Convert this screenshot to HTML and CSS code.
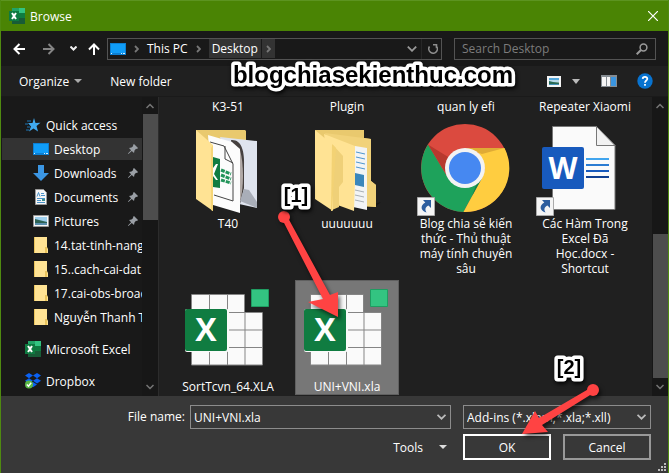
FILE: index.html
```html
<!DOCTYPE html>
<html lang="en">
<head>
<meta charset="utf-8">
<title>Browse</title>
<link rel="stylesheet" href="styles.css">
</head>
<body>
<svg class="defs" aria-hidden="true">
  <defs>
    <symbol id="excel" viewBox="0 0 16 16"><path fill="#21a366" d="M3 0h7v5H3z"/><path fill="#33c481" d="M10 0h6v5h-6z"/><path fill="#107c41" d="M10 5h6v5h-6z"/><path fill="#185c37" d="M3 10h13v6H3z"/><path fill="#0f7a40" d="M0 3h10v10H0z"/><path stroke="#fff" stroke-width="2" d="m3 5 4 6M7 5l-4 6"/></symbol>
    <symbol id="screen" viewBox="0 0 16 12"><path fill="#0c7fd2" d="M0 0h16v12H0z"/><path fill="#109df8" d="M1 1h14v9H1z"/><path fill="#d8f0ff" d="M1 10h1v1H1zM11 10h1v1h-1zM13 10h2v1h-2z"/></symbol>
    <symbol id="folder" viewBox="0 0 14 16"><path fill="#ffe394" d="M1 0h12v10l1 2v4H1z"/><path fill="#eac45c" d="M11 10h2v6h-2zM0 0h1v16H0z"/></symbol>
    <symbol id="pin" viewBox="0 0 10 10"><path fill="#9a9fa5" d="m6 0 4 4-1 1-1-.2L6.500 6.500 6 9 3.800 6.900.7 9.800 0 10l.2-.7L3.100 6.200 1 4l2.500-.5L5.200 2 5 1z"/></symbol>
    <symbol id="down" viewBox="0 0 8 5"><path fill="none" stroke="currentColor" stroke-width="1.500" d="m.5.5 3.500 3.500L7.500.5"/></symbol>
    <symbol id="right" viewBox="0 0 5 8"><path fill="none" stroke="#777" stroke-width="1.800" d="m1 1 3 3-3 3"/></symbol>
    <symbol id="shortcut" viewBox="0 0 18 19"><path fill="#f4f4f4" stroke="#aaa" d="M.5.500h17v18H.5z"/><path fill="#2c5d9e" d="M6 3h8v8l-2.500-2.500C8.500 10 7.500 12 9.500 15.500 4 14 2.500 9 8.300 5.500z"/></symbol>
    <symbol id="sheet" viewBox="0 0 96 96"><path fill="#fafafa" d="M12 12h53v18h18v52H12z"/><path fill="none" stroke="#858585" d="M11.500 11.500h53v18h18v52.500h-71zM29.500 12v70M47.500 12v70M65 30v52M12 29.500h53M12 47h70M12 64.500h70"/><rect x="5" y="26" width="44" height="43" rx="2" fill="#fafafa"/><rect x="5" y="26" width="42" height="42" rx="2" fill="#107c41"/><text x="26" y="58" class="badge-letter" text-anchor="middle">X</text><path fill="#33c481" stroke="#1f9c61" d="M71.500 6.500h17v17h-17z"/></symbol>
  </defs>
</svg>
<main class="window">
  <header class="titlebar">
    <svg class="i16"><use href="#excel"/></svg>
    <h1>Browse</h1>
    <button class="close" aria-label="Close"><svg width="10" height="10" viewBox="0 0 10 10"><path stroke="#fff" stroke-width="1.200" d="m0 0 10 10M10 0 0 10"/></svg></button>
  </header>

  <nav class="navbar" aria-label="Location">
    <button class="go" aria-label="Back"><svg width="12" height="12" viewBox="0 0 12 12"><path fill="none" stroke="#fff" stroke-width="2" d="M12 6H1.500M6.500 1l-5 5 5 5"/></svg></button>
    <button class="go" aria-label="Forward"><svg width="12" height="12" viewBox="0 0 12 12"><path fill="none" stroke="#858585" stroke-width="2" d="M0 6h10.500M5.500 1l5 5-5 5"/></svg></button>
    <button class="recent" aria-label="Recent locations"><svg width="7" height="5" viewBox="0 0 7 5"><path fill="none" stroke="#eee" stroke-width="2" d="m.5.5 3 3 3-3"/></svg></button>
    <button class="up" aria-label="Up"><svg width="12" height="12" viewBox="0 0 12 12"><path fill="none" stroke="#fff" stroke-width="2" d="M6 12V1.500M1 6.500l5-5 5 5"/></svg></button>
    <div class="address">
      <svg class="screen"><use href="#screen"/></svg>
      <svg class="sep"><use href="#right"/></svg>
      <a href="#pc">This PC</a>
      <svg class="sep"><use href="#right"/></svg>
      <a href="#desktop" class="current">Desktop</a>
      <button class="crumb-more" aria-label="Desktop folders"><svg class="sep"><use href="#right"/></svg></button>
      <button class="history" aria-label="Previous locations"><svg width="10" height="6"><use href="#down"/></svg></button>
      <button class="refresh" aria-label="Refresh"><svg width="11" height="12" viewBox="0 0 11 12"><path fill="none" stroke="#8d8d8d" stroke-width="1.600" d="M6 1.700h3.500v3.500M8.800 2.500A4.300 4.300 0 1 1 2.500 3.500"/></svg></button>
    </div>
    <label class="search"><input type="search" placeholder="Search Desktop" aria-label="Search Desktop"><svg width="12" height="12" viewBox="0 0 12 12"><circle cx="7.500" cy="4.500" r="3.400" fill="none" stroke="#999" stroke-width="1.500"/><path stroke="#999" stroke-width="2" d="M5 7 .7 11.300"/></svg></label>
  </nav>

  <div class="toolbar">
    <button class="organize">Organize <svg width="8" height="4" viewBox="0 0 8 4"><path fill="#aaa" d="M0 0h8L4 4z"/></svg></button>
    <button>New folder</button>
    <span class="tools-right">
      <button aria-label="Change your view"><svg width="14" height="11" viewBox="0 0 14 11"><path fill="#f5f5f5" d="M0 0h14v11H0z"/><path fill="#55a8dc" d="M2 2h10v3H2z"/><path fill="#b9dbea" d="M2 4h10v2H2z"/><path fill="#286a55" d="m2 5 4 1 6 .5V9H2z"/><path fill="#4692b8" d="M2 8h10v1H2z"/></svg></button>
      <button class="more" aria-label="More view options"><svg width="8" height="5" viewBox="0 0 8 5"><path fill="#bbb" d="M0 0h8L4 5z"/></svg></button>
      <button class="pane" aria-label="Show the preview pane"><svg width="16" height="12" viewBox="0 0 16 12"><path fill="#858c92" d="M0 0h16v12H0z"/><path fill="#f5f5f5" d="M1 2h4v9H1zM6 2h3v9H6z"/><path fill="#3a95e0" d="M10 2h5v9h-5z"/></svg></button>
      <button aria-label="Help"><svg width="16" height="16" viewBox="0 0 16 16"><circle cx="8" cy="8" r="7.700" fill="#0873d0"/><path fill="none" stroke="#fff" stroke-width="1.800" d="M5.700 5.900C5.800 3.200 10.500 3.300 10.300 6 10.100 7.600 8 7.500 8 9.800M8 11v1.700"/></svg></button>
    </span>
  </div>

  <div class="body">
    <aside class="sidebar">
      <ul class="tree">
        <li class="root"><svg class="i16" viewBox="0 0 16 16"><path fill="#40a9ee" d="m9 1 1.500 5 5-.3-4 3.300 1.500 5.500-4.500-3-4.500 3 2-5-3-3.500h4.500z"/><path stroke="#1c76b7" d="M2 4h4M0 7h3M2 10h3M1 13h3"/></svg><a href="#quick">Quick access</a></li>
        <li class="selected"><svg class="screen"><use href="#screen"/></svg><a href="#desktop">Desktop</a><svg class="pin"><use href="#pin"/></svg></li>
        <li><svg class="i16" viewBox="0 0 16 16"><path fill="#3b96e3" d="M5 0h6v8h5l-8 8-8-8h5z"/></svg><a href="#downloads">Downloads</a><svg class="pin"><use href="#pin"/></svg></li>
        <li><svg class="i16" viewBox="0 0 16 16"><path fill="#f6f6f6" stroke="#9a9a9a" d="M2.500.500h8l3 3v12h-11z"/><path fill="none" stroke="#4a91c8" d="M8 4.500h3M8 6.500h4M4 9.500h8M4 11.500h4M4 13.500h8M4 7.500l1.500-4 1.500 4"/><path fill="#3b8f8b" d="M9 10h3v2H9z"/></svg><a href="#documents">Documents</a><svg class="pin"><use href="#pin"/></svg></li>
        <li><svg class="i16" viewBox="0 0 16 16"><path fill="#f6f6f6" stroke="#999" d="M.5 2.500h15v11H.5z"/><path fill="#9fd0ee" d="M2 4h12v8H2z"/><path fill="#2d6355" d="m2 6 4 1 8 2v1H2z"/><path fill="#5a8fae" d="M2 10h12v2H2z"/></svg><a href="#pictures">Pictures</a><svg class="pin"><use href="#pin"/></svg></li>
        <li><svg class="i16"><use href="#folder"/></svg><a href="#f14">14.tat-tinh-nang</a></li>
        <li><svg class="i16"><use href="#folder"/></svg><a href="#f15">15..cach-cai-dat</a></li>
        <li><svg class="i16"><use href="#folder"/></svg><a href="#f17">17.cai-obs-broad</a></li>
        <li><svg class="i16"><use href="#folder"/></svg><a href="#nguyen">Nguyễn Thanh T</a></li>
        <li class="root spaced"><svg class="i16"><use href="#excel"/></svg><a href="#excel-files">Microsoft Excel</a></li>
        <li class="root spaced"><svg class="i16" viewBox="0 0 16 16"><path fill="#0b62f4" d="m4 0 4 2.600-4 2.600L0 2.600zM12 0l4 2.600-4 2.600-4-2.600zM4 5.200l4 2.600-4 2.600-4-2.600zM12 5.200l4 2.600-4 2.600-4-2.600zM8 9l4 2.600-4 2.600-4-2.600z"/><circle cx="4" cy="11.500" r="4" fill="#58b646"/><path fill="none" stroke="#fff" stroke-width="1.500" d="m1.800 11.500 1.700 1.700 2.700-3.400"/></svg><a href="#dropbox">Dropbox</a></li>
      </ul>
      <div class="scrollbar side-scroll"><svg class="flip" width="8" height="6"><use href="#down"/></svg><i class="thumb"></i><svg width="8" height="6"><use href="#down"/></svg></div>
    </aside>

    <ul class="files">
      <li class="label-only">K3-51</li>
      <li class="label-only">Plugin</li>
      <li class="label-only">quan ly efi</li>
      <li class="label-only">Repeater Xiaomi</li>

      <li class="file"><svg class="big" viewBox="0 0 96 96"><path fill="#e9c96e" d="M16 10h49l1 1v68H16z"/><path fill="#dfe4ee" d="m40 17 37 4v67l-18-4z"/><path fill="#45403f" d="M51 20c10-1 14 10 13 28v20l-4 16z"/><path fill="#b1aaa7" d="M60 30c4 14 4 38 0 52z"/><path fill="#a9aeb8" d="m60 81 4-12 5 1 8 12v6z"/><path fill="#fcfcfc" d="m28 15 24 7 8 7v64l-27-8z"/><path fill="none" stroke="#444" d="m30 22 14 4 9 18v37l-19-6M45 26v13l8 4"/><path fill="#107c41" d="m33 37 7 2v29l-7-1z"/><path fill="#fff" d="m33 48 3-4h2l-4 10 4 6h-2l-3-4z"/><path stroke="#22945a" stroke-width="3" stroke-dasharray="4 1" d="m41 50 10 4M41 55l10 4M41 60l10 3"/><path fill="#ffe394" d="m16 10 17 15v66L16 79z"/><path fill="#f6d677" d="m31 28 2-3v66l-2-1z"/></svg><span>T40</span></li>
      <li class="file"><svg class="big" viewBox="0 0 96 96"><path fill="#161616" d="m54 89 28-7-6 5z"/><path fill="#e9c96e" d="M16 10h49v8l7 1v42l5 4v22l-44-2z"/><path fill="#f1d27a" d="m26 13 46 6v42l5 4v22l-9-1z"/><path fill="#f2f4f5" d="m56 26 12 2v62l-14-3z"/><path stroke="#4d96d0" d="m57 32 9 2M57 37l9 2M57 42l9 2M57 47l9 2"/><path fill="#3a86bb" d="m56 53 9 2v12l-9-2z"/><path stroke="#a8b0b5" d="m56 70 9 2M56 75l9 2M56 80l9 2"/><path fill="#ffe394" d="m25 14 31 12v35l-1 30-22-8z"/><path fill="#efd078" d="m34 25 10 11v26l-4 5v20l-7 3z"/><path fill="#ffe394" d="m16 10 18 15v66L16 79z"/><path fill="#f3d274" d="m33 24 4 4-4 63h-1z"/></svg><span>uuuuuuu</span></li>
      <li class="file"><svg class="big" viewBox="0 0 96 96"><circle cx="47" cy="48" r="44" fill="#db4a3f"/><path fill="#1ea25b" d="M10 24.500A44 44 0 0 0 45.500 92L64 58 47 48l-17 10z"/><path fill="#ffcd40" d="M86.500 28A44 44 0 0 1 45.500 92L64 58l3-10-9-20z"/><path fill="#b7392e" d="m10 24.500 20 33-3-10 4-10z"/><path fill="#e0ab35" d="M47 28h39.500L64 34z"/><path fill="#158348" d="m58 65 6-7-10 18z"/><circle cx="47" cy="48" r="20" fill="#f3f3f3"/><circle cx="47" cy="48" r="16" fill="#4688f1"/><use href="#shortcut" x="-1" y="77" width="18" height="19"/></svg><span>Blog chia sẻ kiến thức - Thủ thuật máy tính chuyên sâu</span></li>
      <li class="file"><svg class="big" viewBox="0 0 96 96"><path fill="#fafafa" stroke="#777" d="M15.500 6.500h44l18.500 19v64H15.500z"/><path fill="#f2f2f2" stroke="#777" d="M59.500 6.500v19H78z"/><rect x="5" y="27" width="42" height="42" rx="2" fill="#185abd"/><text x="26" y="59" class="badge-letter word" text-anchor="middle">W</text><path stroke="#41a5ee" stroke-width="2" d="M49 39h23"/><path stroke="#2b7cd3" stroke-width="2" d="M49 45h23"/><path stroke="#185abd" stroke-width="2" d="M49 51h23"/><path stroke="#103f91" stroke-width="2" d="M49 57h23"/><use href="#shortcut" x="-1" y="77" width="18" height="19"/></svg><span>Các Hàm Trong Excel Đã Học.docx - Shortcut</span></li>

      <li class="file"><svg class="big"><use href="#sheet"/></svg><span>SortTcvn_64.XLA</span></li>
      <li class="file chosen"><svg class="big"><use href="#sheet"/></svg><span>UNI+VNI.xla</span></li>
    </ul>
    <div class="scrollbar main-scroll"><svg class="flip" width="8" height="6"><use href="#down"/></svg><i class="thumb"></i><svg width="8" height="6"><use href="#down"/></svg></div>
  </div>

  <form class="footer">
    <label for="name">File name:</label>
    <span class="combo name"><input id="name" type="text" value="UNI+VNI.xla"><svg width="9" height="6"><use href="#down"/></svg></span>
    <span class="combo"><select aria-label="File type"><option>Add-ins (*.xlam;*.xla;*.xll)</option></select><svg width="9" height="6"><use href="#down"/></svg></span>
    <button type="button" class="menu">Tools <svg width="8" height="4" viewBox="0 0 8 4"><path fill="#ddd" d="M0 0h8L4 4z"/></svg></button>
    <span class="actions"><button type="button" class="push ok">OK</button><button type="button" class="push">Cancel</button></span>
    <svg class="grip" width="8" height="8" viewBox="0 0 8 8"><path fill="#bbb" d="M6 0h2v2H6zM3 3h2v2H3zM6 3h2v2H6zM0 6h2v2H0zM3 6h2v2H3zM6 6h2v2H6z"/></svg>
  </form>

  <svg class="notes" width="669" height="473" viewBox="0 0 669 473">
    <g class="arrow"><circle cx="284" cy="217" r="6"/><path d="M282 219l5-3 43 79 8-3v25l-30-15 15-3z"/></g>
    <g class="arrow"><circle cx="593" cy="390" r="6"/><path d="M592 387l3 5-53 33 6 7-26 2 13-23 4 7z"/></g>
    <text class="brand" x="373" y="83" text-anchor="middle">blogchiasekienthuc.com</text>
    <text class="step" x="296" y="202" text-anchor="middle">[1]</text>
    <text class="step" x="569" y="374" text-anchor="middle">[2]</text>
  </svg>
</main>
</body>
</html>
```
FILE: styles.css
```css
* { box-sizing: border-box; }
body { margin: 0; background: #202020; color: #fff; font: 12px/15px "Open Sans", "Noto Sans", sans-serif; }
button, input, select { font: inherit; color: inherit; background: none; border: 0; margin: 0; padding: 0; border-radius: 0; outline: 0; appearance: none; }
a { color: inherit; text-decoration: none; }
ul { list-style: none; margin: 0; padding: 0; }
svg { flex: none; display: block; }
.defs { position: absolute; width: 0; height: 0; }
.i16 { width: 16px; height: 16px; }

.window { position: relative; min-height: 100vh; display: flex; flex-direction: column; border: 1px solid #4f8a10; border-top: 0; overflow: hidden; }

.titlebar { height: 31px; background: #4a8404; border-top: 1px solid #5c9420; display: flex; align-items: center; gap: 5px; padding: 0 10px 0 8px; }
.titlebar h1 { margin: 0; font-size: 12px; font-weight: 400; }
.close { margin-left: auto; }

.navbar { height: 35px; background: #191919; display: flex; align-items: center; padding: 0 12px; }
.go { width: 30px; }
.recent { width: 18px; margin-left: -3px; }
.up { width: 19px; }
.address { flex: 1; height: 22px; border: 1px solid #535353; display: flex; align-items: center; padding-left: 2px; margin-right: 12px; }
.screen { width: 16px; height: 12px; }
.sep { width: 5px; height: 8px; margin: 0 8px; }
.address a { line-height: 19px; }
.address .current { background: #333; padding: 0 3px; }
.crumb-more { background: #333; height: 19px; width: 13px; margin-left: 1px; }
.crumb-more .sep { margin: 0 4px; }
.history { margin-left: auto; color: #999; padding-right: 4px; }
.refresh { height: 20px; width: 20px; border-left: 1px solid #272727; padding-left: 5px; }
.search { width: 202px; height: 22px; border: 1px solid #535353; display: flex; align-items: center; padding: 0 7px; }
.search input { flex: 1; min-width: 0; }
.search input::placeholder { color: #7c7c7c; opacity: 1; }

.toolbar { height: 31px; background: #202020; border-bottom: 1px solid #1a1a1a; display: flex; align-items: center; padding: 0 15px 0 18px; gap: 28px; }
.organize { display: flex; align-items: center; gap: 5px; }
.tools-right { margin-left: auto; display: flex; align-items: center; }
.more { margin: 0 21px 0 11px; }
.pane { margin-right: 20px; }

.body { flex: 1; display: flex; min-height: 299px; }
.sidebar { width: 158px; background: #191919; border-right: 1px solid #2c2c2c; display: flex; }
.tree { width: 141px; padding: 16px 0 0 1px; overflow: hidden; }
.tree li { height: 24px; display: flex; align-items: center; gap: 5px; padding: 0 4px 0 31px; white-space: nowrap; }
.tree .root { padding-left: 23px; }
.tree .spaced { margin-top: 8px; }
.tree .selected { background: #333; height: 22px; margin: 1px 0; }
.tree .pin { margin-left: auto; }
.pin { width: 10px; height: 10px; }

.scrollbar { background: #171717; display: flex; flex-direction: column; align-items: center; justify-content: space-between; padding: 6px 0; width: 16px; color: #777; }
.flip { transform: rotate(180deg); }
.thumb { width: 15px; background: #4d4d4d; }
.side-scroll .thumb { height: 106px; margin: 5px 0 auto; }
.main-scroll .thumb { height: 144px; margin: auto 0 6px; }

.files { flex: 1; display: grid; grid-template-columns: repeat(auto-fill, 104px); gap: 3px 15px; align-content: start; padding: 2px 1px 0 17px; }
.files li { text-align: center; }
.file { padding: 3px 4px 1px; }
.file span { display: block; margin: 0 -2px; }
.chosen { background: #777; outline: 1px solid #606060; outline-offset: -1px; }
.big { width: 96px; height: 96px; overflow: visible; }
.badge-letter { font: 700 32px "Open Sans", sans-serif; fill: #fff; }
.word { font-size: 30px; }

.footer { background: #383838; height: 77px; position: relative; display: grid; grid-template-columns: 1fr 261px 188px; grid-template-rows: 24px 26px; gap: 5px 12px; padding: 9px 17px 0 0; }
.footer label { text-align: right; line-height: 24px; margin-right: -7px; }
.combo { border: 1px solid #8c8c8c; display: flex; align-items: center; position: relative; color: #bbb; padding-right: 4px; }
.combo input, .combo select { flex: 1; min-width: 0; height: 22px; padding-left: 3px; color: #fff; }
.menu { grid-column: 2; justify-self: end; display: flex; align-items: center; gap: 16px; padding-right: 4px; }
.actions { display: grid; grid-template-columns: 1fr 1fr; gap: 12px; }
.push { border: 2px solid #999; }
.ok { border-color: #fff; }
.grip { position: absolute; right: 2px; bottom: 2px; }

.notes { position: absolute; left: -1px; top: 0; pointer-events: none; }
.notes text { font-family: "Liberation Sans", sans-serif; font-weight: 700; fill: #000; stroke: #fff; stroke-width: 7px; stroke-linejoin: round; paint-order: stroke; filter: drop-shadow(1px 2px 2px #000); }
.brand { font-size: 24px; }
.step { font-size: 20px; }
.arrow { fill: #ff4343; filter: drop-shadow(2px 3px 2px #0009); }
```
